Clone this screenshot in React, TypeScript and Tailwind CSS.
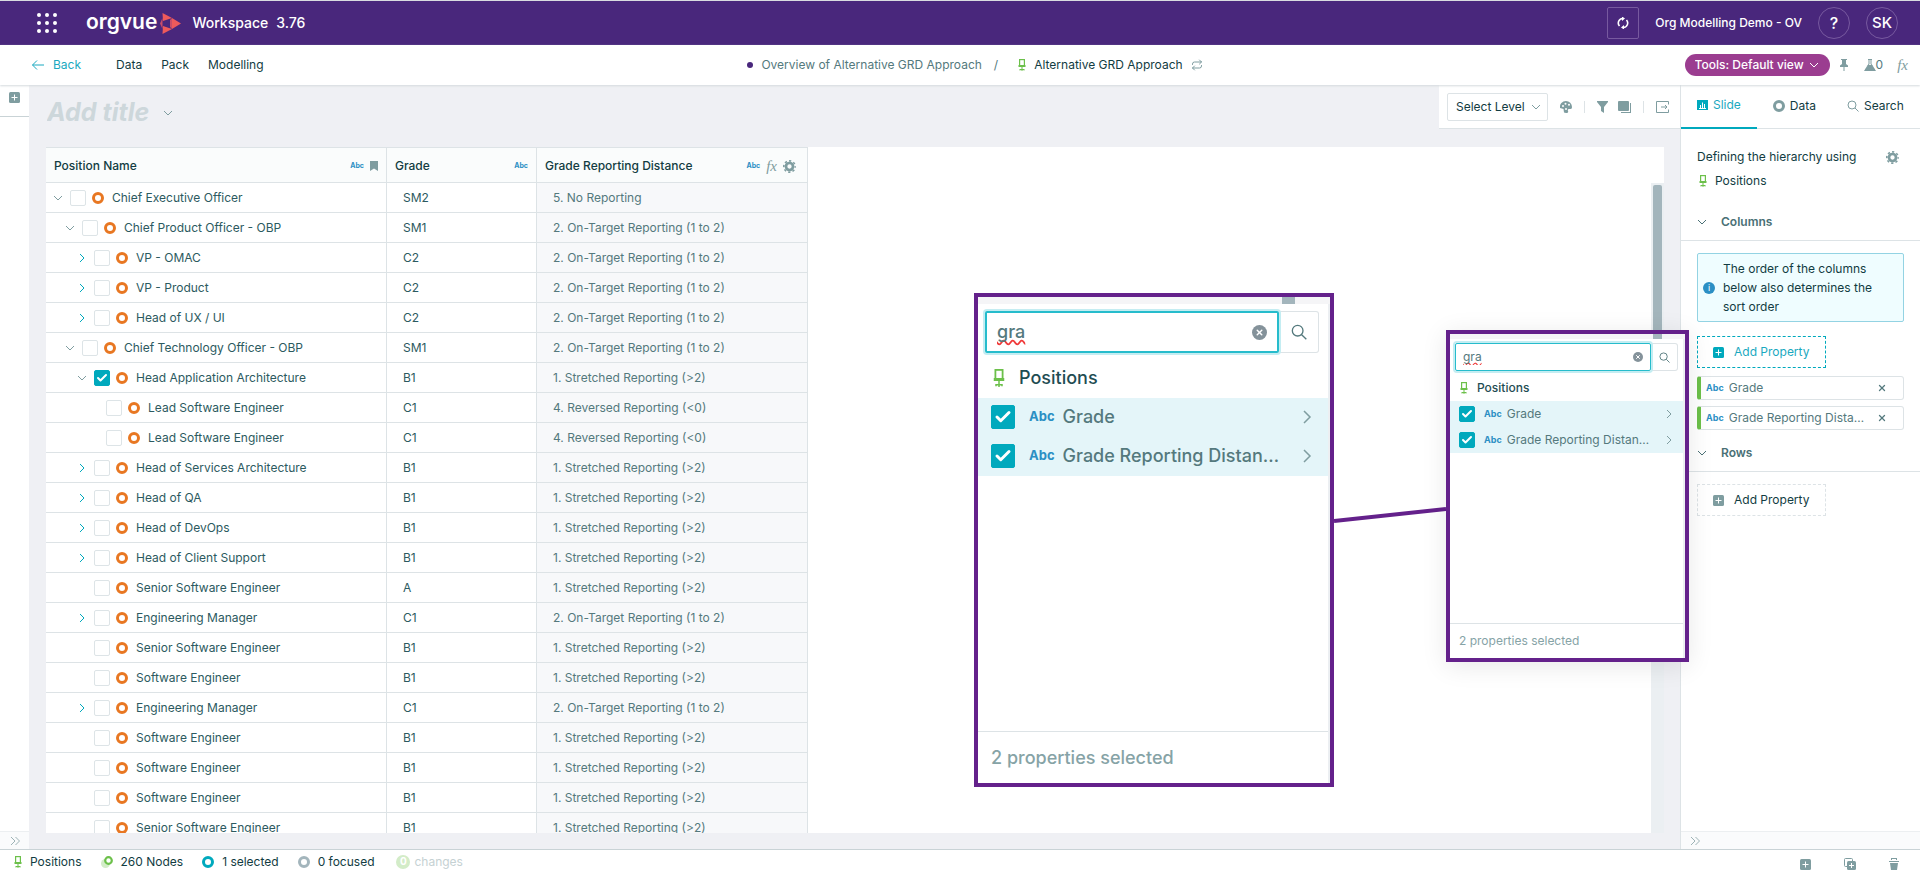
import type { ReactNode } from 'react';
import { Check, Repeat, X } from 'lucide-react';

type Node = {
    id: number;
    name: string;
    level: number;
    state: 'open' | 'closed' | 'leaf';
    grade: string;
    distance: string;
    checked?: boolean;
};

const NO_REPORTING = '5. No Reporting';
const ON_TARGET = '2. On-Target Reporting (1 to 2)';
const STRETCHED = '1. Stretched Reporting (>2)';
const REVERSED = '4. Reversed Reporting (<0)';

const nodes: Node[] = [
    { id: 1, name: 'Chief Executive Officer', level: 0, state: 'open', grade: 'SM2', distance: NO_REPORTING },
    { id: 2, name: 'Chief Product Officer - OBP', level: 1, state: 'open', grade: 'SM1', distance: ON_TARGET },
    { id: 3, name: 'VP - OMAC', level: 2, state: 'closed', grade: 'C2', distance: ON_TARGET },
    { id: 4, name: 'VP - Product', level: 2, state: 'closed', grade: 'C2', distance: ON_TARGET },
    { id: 5, name: 'Head of UX / UI', level: 2, state: 'closed', grade: 'C2', distance: ON_TARGET },
    { id: 6, name: 'Chief Technology Officer - OBP', level: 1, state: 'open', grade: 'SM1', distance: ON_TARGET },
    { id: 7, name: 'Head Application Architecture', level: 2, state: 'open', grade: 'B1', distance: STRETCHED, checked: true },
    { id: 8, name: 'Lead Software Engineer', level: 3, state: 'leaf', grade: 'C1', distance: REVERSED },
    { id: 9, name: 'Lead Software Engineer', level: 3, state: 'leaf', grade: 'C1', distance: REVERSED },
    { id: 10, name: 'Head of Services Architecture', level: 2, state: 'closed', grade: 'B1', distance: STRETCHED },
    { id: 11, name: 'Head of QA', level: 2, state: 'closed', grade: 'B1', distance: STRETCHED },
    { id: 12, name: 'Head of DevOps', level: 2, state: 'closed', grade: 'B1', distance: STRETCHED },
    { id: 13, name: 'Head of Client Support', level: 2, state: 'closed', grade: 'B1', distance: STRETCHED },
    { id: 14, name: 'Senior Software Engineer', level: 2, state: 'leaf', grade: 'A', distance: STRETCHED },
    { id: 15, name: 'Engineering Manager', level: 2, state: 'closed', grade: 'C1', distance: ON_TARGET },
    { id: 16, name: 'Senior Software Engineer', level: 2, state: 'leaf', grade: 'B1', distance: STRETCHED },
    { id: 17, name: 'Software Engineer', level: 2, state: 'leaf', grade: 'B1', distance: STRETCHED },
    { id: 18, name: 'Engineering Manager', level: 2, state: 'closed', grade: 'C1', distance: ON_TARGET },
    { id: 19, name: 'Software Engineer', level: 2, state: 'leaf', grade: 'B1', distance: STRETCHED },
    { id: 20, name: 'Software Engineer', level: 2, state: 'leaf', grade: 'B1', distance: STRETCHED },
    { id: 21, name: 'Software Engineer', level: 2, state: 'leaf', grade: 'B1', distance: STRETCHED },
    { id: 22, name: 'Senior Software Engineer', level: 2, state: 'leaf', grade: 'B1', distance: STRETCHED },
];

const indents = ['pl-1.5', 'pl-[18px]', 'pl-[30px]', 'pl-[42px]'];

const strokes = {
    down: 'M2 4l4 4 4-4',
    right: 'M4 2l4 4-4 4',
    doubleRight: 'M2 2l4 4-4 4M6.5 2l4 4-4 4',
    arrowLeft: 'M12 6H.5M5 1.5L.5 6 5 10.5',
    search: 'M5 1a4 4 0 1 0 0 8a4 4 0 1 0 0-8M8 8l3.5 3.500',
};

function Icon({ name, className = '' }: { name: keyof typeof strokes; className?: string }) {
    return (
        <svg viewBox="0 0 12 12" className={`shrink-0 ${className.includes('size-') ? '' : 'size-3'} ${className}`} fill="none" stroke="currentColor">
            <path d={strokes[name]} />
        </svg>
    );
}

function Ring({ className }: { className: string }) {
    return <span className={`inline-block size-3 shrink-0 rounded-full border-[3px] ${className}`} />;
}

function Chair({ className = 'h-3 w-2' }: { className?: string }) {
    return (
        <svg viewBox="0 0 8 12" className={`shrink-0 text-[#6cc04a] ${className}`} fill="currentColor">
            <rect x="1.600" y="0.600" width="4.800" height="6" fill="none" stroke="currentColor" strokeWidth="1.200" />
            <path d="M.5 6h7v2h-7zM3.500 8h1v2h-1zM1.500 10h5v1.500h-1V11H4.500v1h-1v-1h-1v.5h-1z" />
        </svg>
    );
}

function Gear() {
    return (
        <svg viewBox="0 0 24 24" className="size-[13px] shrink-0 text-[#7f9da0]" fill="none" stroke="currentColor">
            <circle cx="12" cy="12" r="6.5" strokeWidth="5" />
            <circle cx="12" cy="12" r="10.5" strokeWidth="3" strokeDasharray="4.123" strokeDashoffset="2.06" />
        </svg>
    );
}

function PlusBox({ className }: { className: string }) {
    return (
        <svg viewBox="0 0 11 11" className={`size-[11px] shrink-0 ${className}`}>
            <rect width="11" height="11" rx="1.5" fill="currentColor" />
            <path d="M5.5 2.5v6M2.5 5.5h6" stroke="#fff" />
        </svg>
    );
}

function Fx() {
    return <span className="font-['Liberation_Serif',serif] text-[15px] leading-4 text-[#7f9da0] italic">fx</span>;
}

function Abc({ className = 'text-[7px]' }: { className?: string }) {
    return <span className={`font-bold text-[#2b8fc4] ${className}`}>Abc</span>;
}

function Tick({ checked = false, label, large = false }: { checked?: boolean; label: string; large?: boolean }) {
    return (
        <span className={`relative inline-grid shrink-0 ${large ? 'size-6' : 'size-4'}`}>
            <input
                type="checkbox"
                defaultChecked={checked}
                aria-label={label}
                className="peer size-full appearance-none rounded-[2px] border border-[#dde4e7] bg-white checked:border-[#00a9bd] checked:bg-[#00a9bd]"
            />
            <Check strokeWidth={4} className="pointer-events-none absolute inset-0 m-auto hidden size-3/4 text-white peer-checked:block" />
        </span>
    );
}

function HeaderCell({ title, width, children }: { title: string; width: string; children: ReactNode }) {
    return (
        <th className={`border-r border-b border-[#dde3e6] px-2 pt-0.5 text-left font-medium text-[#123c42] ${width}`}>
            <div className="flex items-center justify-between">
                <span>{title}</span>
                <span className="flex items-center gap-1.5">{children}</span>
            </div>
        </th>
    );
}

function PositionsTable() {
    return (
        <table className="w-[762px] shrink-0 table-fixed border-separate border-spacing-0 self-start border-t border-[#dde3e6] text-[#2c5a60]">
            <thead>
                <tr className="h-[35px] bg-[#fafcfc]">
                    <HeaderCell title="Position Name" width="w-[341px]">
                        <Abc />
                        <svg viewBox="0 0 8 10" className="h-2.5 w-2 text-[#7f9da0]" fill="currentColor">
                            <path d="M0 0h8v10L4 7.5 0 10z" />
                        </svg>
                    </HeaderCell>
                    <HeaderCell title="Grade" width="w-[150px]">
                        <Abc />
                    </HeaderCell>
                    <HeaderCell title="Grade Reporting Distance" width="w-[271px]">
                        <Abc />
                        <Fx />
                        <span className="pr-[3px]">
                            <Gear />
                        </span>
                    </HeaderCell>
                </tr>
            </thead>
            <tbody>
                {nodes.map((node) => (
                    <tr key={node.id} className="h-[30px]">
                        <td className="border-r border-b border-[#dde3e6]">
                            <div className={`flex items-center ${indents[node.level]}`}>
                                <span className="mr-1.5 flex w-3 justify-center">
                                    {node.state === 'open' && <Icon name="down" className="text-[#7f9da0]" />}
                                    {node.state === 'closed' && <Icon name="right" className="text-[#00a9bd]" />}
                                </span>
                                <Tick checked={node.checked} label={node.name} />
                                <Ring className="mr-2 ml-1.5 border-[#e87722]" />
                                <span>{node.name}</span>
                            </div>
                        </td>
                        <td className="border-r border-b border-[#dde3e6] px-4">{node.grade}</td>
                        <td className="border-r border-b border-[#dde3e6] bg-[#f7f8fa] px-4 text-[#54797d]">{node.distance}</td>
                    </tr>
                ))}
            </tbody>
        </table>
    );
}

function TopBar() {
    return (
        <header className="flex h-[45px] shrink-0 items-center border-t border-[#d9dbe0] bg-[#49277c] pr-[22px] pl-[37px] font-medium text-white">
            <button aria-label="Apps">
                <svg viewBox="0 0 21 21" className="size-[21px]" fill="currentColor">
                    {[2, 10, 18].map((y) => [2, 10, 18].map((x) => <circle key={`${x}-${y}`} cx={x} cy={y} r="2" />))}
                </svg>
            </button>
            <a href="#" className="ml-7 flex items-center gap-[3px] text-[21px] leading-7 font-semibold">
                <span className="pb-0.5">orgvue</span>
                <svg viewBox="0 0 21 21" className="size-[21px]">
                    <path d="M2.500 0L12 5 3 8zM2.500 21L12 16 3 13zM12 5l9 5.500L12 16z" fill="#ee5a5b" />
                    <path d="M2.500 5L0 10.500 2.500 16z" fill="#c94d68" />
                    <path d="M12 5v11l-2-2V7z" fill="#c94d68" />
                </svg>
            </a>
            <span className="ml-[11px] text-sm">Workspace</span>
            <span className="ml-2 text-sm">3.76</span>
            <div className="ml-auto flex items-center gap-4">
                <button aria-label="Refresh" className="flex size-8 items-center justify-center rounded-[2px] border border-[#77599f]">
                    <svg viewBox="0 0 12 12" className="size-3" fill="none" stroke="currentColor" strokeWidth="1.6">
                        <path d="M2.500 9A4.500 4.500 0 0 1 5.500 1.500M9.500 3A4.500 4.500 0 0 1 6.500 10.500" />
                        <path d="M5 -.5l3 2-3 2.500zM7 8l-3 2.500 3 2z" fill="currentColor" stroke="none" />
                    </svg>
                </button>
                <span>Org Modelling Demo - OV</span>
                <button className="size-8 rounded-full border border-[#77599f] text-base">?</button>
                <button className="size-8 rounded-full border border-[#77599f] text-[15px]">SK</button>
            </div>
        </header>
    );
}

function NavBar() {
    return (
        <nav className="z-10 flex h-10 shrink-0 items-center bg-white pr-3 pl-8 text-[#123c42] shadow-[0_1px_2px_#d5dade]">
            <div className="flex flex-1 items-center gap-[19px]">
                <a href="#" className="mr-4 flex items-center gap-[9px] text-[#1aa9c0]">
                    <Icon name="arrowLeft" />
                    Back
                </a>
                <a href="#">Data</a>
                <a href="#">Pack</a>
                <a href="#">Modelling</a>
            </div>
            <div className="flex items-center pl-2.5">
                <span className="mr-2 size-1.5 rounded-full bg-[#49277c]" />
                <a href="#" className="text-[#54797d]">Overview of Alternative GRD Approach</a>
                <span className="mx-3 text-[#54797d]">/</span>
                <Chair className="mx-2 h-3 w-2" />
                <span>Alternative GRD Approach</span>
                <Repeat className="ml-2 size-3 text-[#7f9da0]" />
            </div>
            <div className="flex flex-1 items-center justify-end">
                <div className="relative mr-2.5 flex items-center text-white">
                    <select aria-label="Tools" className="h-[22px] w-[145px] appearance-none rounded-full bg-[#9b3d90] px-2.5 font-medium">
                        <option>Tools: Default view</option>
                    </select>
                    <Icon name="down" className="pointer-events-none absolute right-2.5" />
                </div>
                <svg viewBox="0 0 8 12" className="mr-4 h-3 w-2 text-[#7f9da0]" fill="currentColor">
                    <path d="M1 0h6v1H6v4l2 1.5V8H0V6.5L2 5V1H1zM3.5 8h1v4h-1z" />
                </svg>
                <svg viewBox="0 0 12 12" className="size-3 text-[#7f9da0]" fill="currentColor">
                    <path d="M4 0h4v1H4zM4.5 1h1v4L2.5 9h7l-3-4V1h1v3.7L12 12H0l4.5-7.3z" />
                    <path d="M4 6h4l3 5H1z" />
                </svg>
                <span className="mr-3.5 text-[#54797d]">0</span>
                <Fx />
            </div>
        </nav>
    );
}

function Toolbar() {
    return (
        <div className="flex h-11 items-center border-b border-[#dde3e6] bg-white pr-[11px] pl-2 text-[#7f9da0]">
            <div className="relative mr-3 flex items-center">
                <select aria-label="Select level" className="h-7 w-[101px] appearance-none rounded-[2px] border border-[#dde3e6] px-2 text-[#123c42]">
                    <option>Select Level</option>
                </select>
                <Icon name="down" className="pointer-events-none absolute right-1.5" />
            </div>
            <button aria-label="Colours">
                <svg viewBox="0 0 12 12" className="size-3">
                    <path d="M6 0a6 6 0 0 1 6 6c0 2-1 2-2.5 2S7.500 9 8 10s0 2-2 2L4 11.500 3.500 8 0 7a6 6 0 0 1 6-7z" fill="currentColor" />
                    <g fill="#fff">
                        <circle cx="3" cy="5" r="1" />
                        <circle cx="5.5" cy="2.8" r="1" />
                        <circle cx="9" cy="3.8" r="1" />
                        <circle cx="6" cy="8" r="1" />
                    </g>
                </svg>
            </button>
            <span className="mx-3 h-3 w-px bg-[#dde3e6]" />
            <button aria-label="Filter">
                <svg viewBox="0 0 11 12" className="h-3 w-[11px]" fill="currentColor">
                    <path d="M0 0h11v1L7 6v6L4 10V6L0 1z" />
                </svg>
            </button>
            <button aria-label="Layers" className="ml-2.5">
                <svg viewBox="0 0 13 12" className="h-3 w-[13px]" fill="currentColor">
                    <rect width="11" height="10" rx="1" />
                    <path d="M12 2h1v10H3v-1h9z" />
                </svg>
            </button>
            <span className="mx-3 h-3 w-px bg-[#dde3e6]" />
            <button aria-label="Export">
                <svg viewBox="0 0 13 12" className="h-3 w-[13px]" fill="none" stroke="currentColor">
                    <path d="M12.5 3.5v-3H.5v11h12v-3M5 6h6M9 4l2 2-2 2" />
                </svg>
            </button>
        </div>
    );
}

function SectionHeader({ title }: { title: string }) {
    return (
        <button className="flex h-[37px] w-full items-center gap-[13px] border-b border-[#dde3e6] px-[15px] font-semibold text-[#4a7075]">
            <Icon name="down" />
            {title}
        </button>
    );
}

function PropertyChip({ name }: { name: string }) {
    return (
        <div className="flex h-6 items-center rounded-[3px] border border-l-4 border-[#dde3e6] border-l-[#6cc04a] pr-4 pl-[5px] text-[#54797d]">
            <Abc className="text-[9px]" />
            <span className="ml-[5px] flex-1 truncate">{name}</span>
            <button aria-label={`Remove ${name}`} className="ml-2.5">
                <X className="size-[10px]" strokeWidth={3} />
            </button>
        </div>
    );
}

function SidePanel() {
    return (
        <aside className="flex w-60 shrink-0 flex-col border-l border-[#dde3e6] bg-white text-[#123c42]">
            <div className="flex h-11 shrink-0 border-b border-[#dde3e6]">
                <button className="-mb-px flex items-center gap-[5px] border-b-2 border-[#00a9bd] px-4 pb-0.5 text-[#1aa9c0]">
                    <svg viewBox="0 0 11 10" className="h-2.5 w-[11px]">
                        <rect width="11" height="10" fill="#00a9bd" />
                        <path d="M3.5 8V5M5.5 8V2.5M7.5 8V4M2 8.5h7" stroke="#fff" />
                    </svg>
                    Slide
                </button>
                <button className="flex items-center gap-[5px] px-4 pb-0.5">
                    <Ring className="border-[#7f9da0]" />
                    Data
                </button>
                <button className="flex items-center gap-[5px] pb-0.5 pl-[15px]">
                    <Icon name="search" className="text-[#7f9da0]" />
                    Search
                </button>
            </div>
            <div className="flex items-center justify-between pt-5 pr-[21px] pl-4">
                <span>Defining the hierarchy using</span>
                <Gear />
            </div>
            <div className="flex items-center gap-2 px-4 pt-2 pb-[15px]">
                <Chair className="ml-[2px] h-3 w-2" />
                Positions
            </div>
            <SectionHeader title="Columns" />
            <div className="flex flex-col items-start px-4 py-3">
                <div className="flex w-full items-center gap-2 rounded-[2px] border border-[#93d3e3] bg-[#effdff] py-[5px] pr-5 pl-[5px] leading-[19px]">
                    <span className="flex size-3 shrink-0 items-center justify-center rounded-full bg-[#2b8fc4] text-[9px] text-white">i</span>
                    <p>The order of the columns below also determines the sort order</p>
                </div>
                <button className="mt-3.5 flex h-8 w-[129px] items-center gap-2.5 border border-dashed border-[#00a9bd] px-[15px] text-[#1aa9c0]">
                    <PlusBox className="text-[#00a9bd]" />
                    Add Property
                </button>
                <div className="mt-2 flex w-full flex-col gap-1.5">
                    <PropertyChip name="Grade" />
                    <PropertyChip name="Grade Reporting Distance" />
                </div>
            </div>
            <div className="-mt-[7px]">
                <SectionHeader title="Rows" />
            </div>
            <button className="mx-4 mt-3 flex h-8 w-[129px] items-center gap-2.5 border border-dashed border-[#dde3e6] px-[15px]">
                <PlusBox className="text-[#7f9da0]" />
                Add Property
            </button>
            <div className="mt-auto flex h-[18px] items-center border-t border-[#eceff1] bg-[#fafbfc] px-2 text-[#9db3b6]">
                <Icon name="doubleRight" />
            </div>
        </aside>
    );
}

function PickerRow({ name, large }: { name: string; large: boolean }) {
    return (
        <li className={`flex items-center bg-[#e4f5f9] text-[#54797d] ${large ? 'h-[39px] pr-3 pb-0.5 pl-[13px]' : 'h-[26px] pr-2 pl-[9px]'}`}>
            <Tick checked label={name} large={large} />
            <Abc className={large ? 'mr-2 ml-3.5 text-[13px]' : 'mr-[5px] ml-[9px] text-[9px]'} />
            <span className={`truncate ${large ? 'w-[220px]' : 'w-[145px]'}`}>{name}</span>
            <Icon name="right" className={`ml-auto text-[#7f9da0] ${large ? 'size-[18px]' : 'size-3'}`} />
        </li>
    );
}

function PropertyPicker({ large = false }: { large?: boolean }) {
    return (
        <div
            className={`flex shrink-0 flex-col border-4 border-[#64218b] bg-white ${
                large ? 'h-[494px] w-[360px] text-lg font-medium' : 'mt-[37px] h-[332px] w-[243px] shadow-[0_4px_24px_#00000018]'
            }`}
        >
            {/* strip of the canvas still visible above the menu */}
            <div className={`flex shrink-0 justify-end bg-[#f5f5f7] ${large ? 'h-[7px] pr-[35px]' : 'h-[5px] pr-[23px]'}`}>
                <span className={`h-full bg-[#a3b5bc] ${large ? 'w-[13px]' : 'w-[9px]'}`} />
            </div>
            <div className={`flex flex-1 flex-col border-r-2 border-[#eceff2] ${large ? 'pt-[7px]' : 'pt-1'}`}>
                <div className={`flex shrink-0 ${large ? 'h-[42px] pr-[9px] pl-[7px]' : 'h-7 pr-[5px] pl-[5px]'}`}>
                    <div
                        className={`z-10 flex flex-1 items-center rounded-[2px] border-[#26bccc] shadow-[0_0_0_2px_#c4edf2] ${
                            large ? 'border-2 px-2.5' : 'border px-[7px]'
                        }`}
                    >
                        <input
                            type="text"
                            aria-label="Search properties"
                            defaultValue="gra"
                            className="w-0 flex-1 text-[#54797d] underline decoration-[#f03a3a] decoration-wavy outline-none [text-decoration-skip-ink:none]"
                        />
                        <button
                            aria-label="Clear"
                            className={`flex items-center justify-center rounded-full bg-[#84929a] text-white ${large ? 'size-[15px]' : 'size-[10px]'}`}
                        >
                            <X className="size-3/5" strokeWidth={4} />
                        </button>
                    </div>
                    <button
                        aria-label="Search"
                        className={`flex items-center justify-center rounded-r-[3px] border border-l-0 border-[#dde3e6] text-[#54797d] ${
                            large ? 'w-10' : 'w-[27px]'
                        }`}
                    >
                        <Icon name="search" className={large ? 'size-4' : 'size-[11px]'} />
                    </button>
                </div>
                <div
                    className={`flex shrink-0 items-center font-medium text-[#1f4d53] ${
                        large ? 'h-[45px] gap-[14px] pt-1 pl-[15px]' : 'h-[30px] gap-[9px] pt-1 pl-2.5'
                    }`}
                >
                    <Chair className={large ? 'h-[18px] w-3' : 'h-3 w-2'} />
                    Positions
                </div>
                <ul>
                    <PickerRow name="Grade" large={large} />
                    <PickerRow name="Grade Reporting Distance" large={large} />
                </ul>
                <div
                    className={`mt-auto flex items-center border-t border-[#dde3e6] text-[#86a3a6] ${
                        large ? 'h-[52px] pl-[13px]' : 'h-[35px] pl-[9px]'
                    }`}
                >
                    2 properties selected
                </div>
            </div>
        </div>
    );
}

function StatusBar() {
    return (
        <footer className="flex h-[29px] shrink-0 items-center border-t border-[#c9d3d6] bg-white pr-[21px] pb-1 pl-[14px] text-[#123c42]">
            <span className="flex items-center gap-2">
                <Chair />
                Positions
            </span>
            <span className="ml-[19px] flex items-center gap-2">
                <svg viewBox="0 0 12 12" className="size-3">
                    <circle cx="4.5" cy="7.5" r="4.5" fill="#d3ecc8" />
                    <circle cx="7.5" cy="4.5" r="3.3" fill="#fff" stroke="#6cc04a" strokeWidth="2.2" />
                </svg>
                260 Nodes
            </span>
            <span className="ml-[19px] flex items-center gap-2">
                <Ring className="border-[#00a9bd]" />1 selected
            </span>
            <span className="ml-[19px] flex items-center gap-2">
                <Ring className="border-[#a3b5bc]" />0 focused
            </span>
            <span className="ml-[22px] flex items-center gap-1 text-[#c5d1d3]">
                <span className="flex size-[14px] items-center justify-center rounded-full bg-[#d3ecc8] text-[10px] font-bold text-white">0</span>
                changes
            </span>
            <div className="ml-auto flex items-center gap-[33px] pt-1 text-[#7f9da0]">
                <button aria-label="Add">
                    <PlusBox className="text-[#7f9da0]" />
                </button>
                <button aria-label="Duplicate">
                    <svg viewBox="0 0 12 12" className="size-3">
                        <rect x=".5" y=".5" width="8" height="8" rx="1" fill="#fff" stroke="currentColor" />
                        <rect x="3" y="3" width="9" height="9" rx="1.5" fill="currentColor" />
                        <path d="M7.5 5v5M5 7.5h5" stroke="#fff" />
                    </svg>
                </button>
                <button aria-label="Delete">
                    <svg viewBox="0 0 10 12" className="h-3 w-2.5" fill="currentColor">
                        <path d="M2 0h6v2H7V1H3v1H2zM0 3h10v1H0zM1 5h8l-1 7H2z" />
                    </svg>
                </button>
            </div>
        </footer>
    );
}

export default function App() {
    return (
        <div className="relative flex h-screen flex-col overflow-hidden bg-white font-[Inter,sans-serif] text-xs">
            <TopBar />
            <NavBar />
            <div className="flex min-h-0 flex-1">
                <div className="flex w-[29px] shrink-0 flex-col">
                    <button aria-label="Add slide" className="flex h-8 justify-center border-b border-[#c9d3d6] pt-[7px]">
                        <PlusBox className="text-[#7f9da0]" />
                    </button>
                    <button
                        aria-label="Expand slides"
                        className="mt-auto flex h-[18px] items-center justify-center border-t border-[#eceff1] bg-[#fafbfc] text-[#9db3b6]"
                    >
                        <Icon name="doubleRight" />
                    </button>
                </div>
                <main className="flex min-w-0 flex-1 flex-col bg-[#eff0f4] pb-4 pl-[17px]">
                    <div className="flex h-[62px] shrink-0 items-start justify-between">
                        <div className="flex h-14 items-center gap-[3px] pl-px text-[#7f9da0]">
                            <input
                                type="text"
                                aria-label="Title"
                                placeholder="Add title"
                                className="w-28 text-[25px] font-bold italic placeholder:text-[#cdd7db]"
                            />
                            <Icon name="down" />
                        </div>
                        <Toolbar />
                    </div>
                    <div className="mr-4 flex min-h-0 flex-1 justify-between overflow-hidden bg-white">
                        <PositionsTable />
                        <div className="mt-9 w-[13px] bg-[#ebeff2] px-[2px] pt-[2px]">
                            <div className="h-60 rounded-[2px] bg-[#a3b5bc]" />
                        </div>
                    </div>
                </main>
                <SidePanel />
            </div>
            <StatusBar />

            {/* magnified view of the open property menu, joined to it by a line */}
            <div className="absolute top-[293px] right-[231px] z-20 flex">
                <PropertyPicker large />
                <svg viewBox="0 0 112 494" className="h-[494px] w-[112px]">
                    <path d="M0 228L112 216" stroke="#64218b" strokeWidth="4" />
                </svg>
                <PropertyPicker />
            </div>
        </div>
    );
}
